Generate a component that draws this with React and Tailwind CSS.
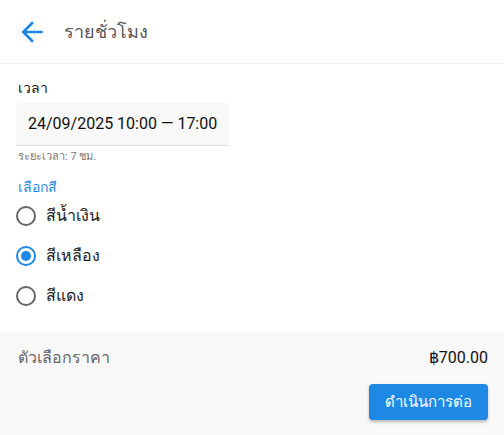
import React from "react";

function Radio({ checked, label }) {
  return (
    <label className="flex h-[40px] items-center">
      <span className="flex h-[20px] w-[20px] items-center justify-center">
        {checked ? (
          <svg width="20" height="20" viewBox="0 0 20 20">
            <circle cx="10" cy="10" r="9" fill="none" stroke="#1e88e5" strokeWidth="2" />
            <circle cx="10" cy="10" r="5" fill="#1e88e5" />
          </svg>
        ) : (
          <svg width="20" height="20" viewBox="0 0 20 20">
            <circle cx="10" cy="10" r="9" fill="none" stroke="#666666" strokeWidth="2" />
          </svg>
        )}
      </span>
      <span className="ml-[10px] text-[16px] text-[#222]">{label}</span>
    </label>
  );
}

export default function App() {
  return (
    <div
      className="flex h-[435px] w-[504px] flex-col bg-white"
      style={{ fontFamily: 'Roboto, "Noto Sans", sans-serif' }}
    >
      <div className="flex h-[64px] items-center border-b border-[#efefef] px-[16px]">
        <svg width="32" height="32" viewBox="0 0 24 24">
          <path d="M20 11H7.83l5.59-5.59L12 4l-8 8 8 8 1.41-1.41L7.83 13H20v-2z" fill="#1e88e5" />
        </svg>
        <span className="ml-[16px] text-[18px] text-[#555]">รายชั่วโมง</span>
      </div>

      <div className="flex flex-1 flex-col px-[16px] pt-[14px]">
        <div className="ml-[2px] text-[14px] font-medium text-[#111]">เวลา</div>
        <div className="mt-[4px] flex h-[43px] w-[213px] items-center whitespace-nowrap rounded-t-[4px] border-b border-[#dcdcdc] bg-[#f8f8f8] pl-[12px] text-[16px] text-[#111]">
          24/09/2025 10:00 — 17:00
        </div>
        <div className="ml-[2px] mt-[3px] text-[11px] text-[#777]">ระยะเวลา: 7 ชม.</div>
        <div className="ml-[2px] mt-[11px] text-[14px] text-[#1e88e5]">เลือกสี</div>
        <div className="-mt-[2px] flex flex-col">
          <Radio label="สีน้ำเงิน" />
          <Radio label="สีเหลือง" checked />
          <Radio label="สีแดง" />
        </div>
      </div>

      <div className="flex h-[103px] flex-col bg-[#f8f8f8] px-[16px] pt-[14px]">
        <div className="flex items-center justify-between">
          <span className="ml-[2px] text-[16px] text-[#666]">ตัวเลือกราคา</span>
          <span className="text-[16px] text-[#111]">฿700.00</span>
        </div>
        <div className="mt-[14px] flex justify-end">
          <button className="h-[36px] rounded-[4px] bg-[#1e88e5] px-[16px] text-[15px] font-medium text-white shadow-[0_2px_3px_rgba(0,0,0,0.25)]">
            ดำเนินการต่อ
          </button>
        </div>
      </div>
    </div>
  );
}
